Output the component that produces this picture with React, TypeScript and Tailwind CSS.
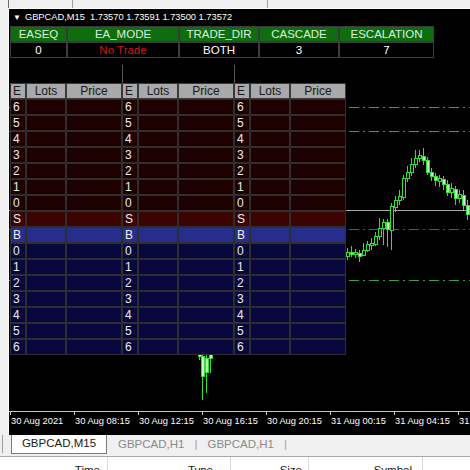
import React from "react";

type Kind = "head" | "sell" | "s" | "b" | "buy";

const ROW_STYLE: Record<Kind, string> = {
  head: "bg-[#a9a9a9] text-[#1a1a1a] border-[#3a3a3a]",
  sell: "bg-[#1e0000] text-[#ececec] border-[#2e2e2e]",
  s: "bg-[#3c0303] text-[#ececec] border-[#2e2e2e]",
  b: "bg-[#272d8b] text-[#ececec] border-[#2e2e2e]",
  buy: "bg-[#08083f] text-[#ececec] border-[#2e2e2e]",
};

// [x, open, close, high, low] in page pixels
const CANDLES: number[][] = [
  [347, 256, 252, 248, 260],
  [351, 252, 254, 246, 257],
  [355, 254, 252, 249, 258],
  [359, 253, 256, 250, 262],
  [363, 255, 250, 243, 256],
  [367, 250, 244, 241, 252],
  [371, 245, 243, 238, 250],
  [375, 244, 236, 232, 246],
  [379, 236, 228, 218, 240],
  [383, 228, 222, 219, 245],
  [387, 222, 229, 219, 247],
  [391, 230, 206, 203, 250],
  [395, 207, 200, 196, 212],
  [399, 200, 196, 190, 205],
  [403, 197, 178, 175, 200],
  [407, 178, 172, 166, 182],
  [411, 172, 164, 158, 176],
  [415, 164, 158, 150, 168],
  [419, 158, 155, 150, 162],
  [423, 156, 160, 148, 165],
  [427, 160, 172, 157, 175],
  [431, 172, 176, 168, 181],
  [435, 176, 180, 173, 186],
  [439, 181, 178, 175, 187],
  [443, 179, 184, 176, 190],
  [447, 184, 192, 180, 196],
  [451, 192, 188, 183, 198],
  [455, 189, 198, 186, 205],
  [459, 198, 194, 190, 203],
  [463, 195, 205, 190, 210],
  [467, 205, 214, 200, 220],
  // under the middle ladder
  [199, 345, 356, 340, 360],
  [202, 356, 376, 350, 400],
  [206, 358, 372, 352, 393],
  [210, 350, 358, 345, 373],
];

const HLINES = [
  { y: 107, color: "#3f9f3f", dash: "10 4 2 4" },
  { y: 131, color: "#3f9f3f", dash: "10 4 2 4" },
  { y: 210, color: "#a8a8a8", dash: undefined },
  { y: 229, color: "#e01c1c", dash: "10 4 2 4" },
  { y: 280, color: "#3f9f3f", dash: "10 4 2 4" },
];

const AXIS = [
  "30 Aug 2021",
  "30 Aug 08:15",
  "30 Aug 12:15",
  "30 Aug 16:15",
  "30 Aug 20:15",
  "31 Aug 00:15",
  "31 Aug 04:15",
  "31 Aug 08:15",
];

function ChartDrawing() {
  return (
    <svg className="absolute inset-0 h-full w-full" shapeRendering="crispEdges">
      <g transform="translate(-9,-9)">
        {HLINES.map((l) => (
          <line
            key={l.y}
            x1={9}
            x2={470}
            y1={l.y + 0.5}
            y2={l.y + 0.5}
            stroke={l.color}
            strokeDasharray={l.dash}
          />
        ))}
        {CANDLES.map(([x, o, c, h, lo]) => {
          const top = Math.min(o, c);
          const bull = c < o;
          return (
            <g key={x}>
              <line x1={x + 0.5} x2={x + 0.5} y1={h} y2={lo} stroke="#34e034" />
              <rect
                x={x - 1}
                y={top + 0.5}
                width={3}
                height={Math.max(1, Math.abs(o - c))}
                fill={bull ? "#000000" : "#bdf5bd"}
                stroke="#34e034"
              />
            </g>
          );
        })}
      </g>
    </svg>
  );
}

function LadderRow({ kind, e, lots = "", price = "" }: { kind: Kind; e: string; lots?: string; price?: string }) {
  const base = `h-[16px] border leading-[14px] ${ROW_STYLE[kind]}`;
  return (
    <div className="flex">
      <div className={`${base} w-[16px] pl-[2px]`}>{e}</div>
      <div className={`${base} w-[40px] text-center`}>{lots}</div>
      <div className={`${base} w-[56px] text-center`}>{price}</div>
    </div>
  );
}

function Ladder() {
  return (
    <div className="flex w-[112px] flex-col text-[12px]">
      <LadderRow kind="head" e="E" lots="Lots" price="Price" />
      {["6", "5", "4", "3", "2", "1", "0"].map((n) => (
        <LadderRow key={"s" + n} kind="sell" e={n} />
      ))}
      <LadderRow kind="s" e="S" />
      <LadderRow kind="b" e="B" />
      {["0", "1", "2", "3", "4", "5", "6"].map((n) => (
        <LadderRow key={"b" + n} kind="buy" e={n} />
      ))}
    </div>
  );
}

const INFO = [
  { head: "EASEQ", value: "0", w: "w-[57px]", red: false },
  { head: "EA_MODE", value: "No Trade", w: "w-[112px]", red: true },
  { head: "TRADE_DIR", value: "BOTH", w: "w-[80px]", red: false },
  { head: "CASCADE", value: "3", w: "w-[80px]", red: false },
  { head: "ESCALATION", value: "7", w: "w-[95px]", red: false },
];

export default function App() {
  return (
    <div className="flex h-[470px] w-[470px] flex-col overflow-hidden bg-[#f0f0f0] font-['Liberation_Sans',Arial,sans-serif]">
      {/* window frames above the chart */}
      <div className="flex h-[8px] shrink-0">
        <div className="w-[9px] border-r border-[#6a6a6a]" />
        <div className="w-[64px] border-r border-[#a0a0a0]" />
        <div className="w-[195px] border-r border-[#a0a0a0]" />
      </div>

      <div className="flex h-[427px] shrink-0">
        <div className="w-[8px] bg-[#f0f0f0]" />
        {/* chart */}
        <div className="relative flex flex-1 flex-col overflow-hidden border-l border-t border-white bg-black">
          <ChartDrawing />
          <div className="relative flex flex-1 flex-col pl-[1px]">
            <div className="flex h-[17px] items-center gap-[4px] pl-[3px] text-[9.3px] leading-[17px] text-white">
              <span className="text-[8px]">▼</span>
              <span>GBPCAD,M15&nbsp; 1.73570 1.73591 1.73500 1.73572</span>
            </div>

            <div className="flex text-[11.5px]">
              {INFO.map((c) => (
                <div key={c.head} className={`flex flex-col ${c.w}`}>
                  <div className="h-[16px] border border-[#3a3a3a] bg-[#0e6d0e] text-center leading-[15px] text-[#dcefdc]">
                    {c.head}
                  </div>
                  <div
                    className={`h-[16px] border border-[#3c3c3c] bg-black text-center leading-[15px] ${
                      c.red ? "text-[#d01818]" : "text-white"
                    }`}
                  >
                    {c.value}
                  </div>
                </div>
              ))}
            </div>

            <div className="flex h-[25px]">
              <div className="w-[112px]" />
              <div className="w-[112px] pt-[7px]">
                <div className="h-[18px] border-l border-[#555555]" />
              </div>
              <div className="w-[112px] pt-[7px]">
                <div className="h-[18px] border-l border-[#555555]" />
              </div>
            </div>

            <div className="flex">
              <Ladder />
              <Ladder />
              <Ladder />
            </div>

            <div className="flex-1" />
          </div>

          {/* time axis */}
          <div className="relative flex h-[24px] shrink-0 border-t border-[#c8c8c8] pl-[1px] text-[9.3px] text-white">
            {AXIS.map((t) => (
              <div key={t} className="flex w-[64px] shrink-0 flex-col">
                <div className="h-[3px] w-px bg-[#c8c8c8]" />
                <div className="whitespace-nowrap pl-px leading-[12px]">{t}</div>
              </div>
            ))}
          </div>
        </div>
      </div>

      {/* chart tabs */}
      <div className="flex h-[21px] shrink-0 items-start text-[11.5px]">
        <div className="h-[18px] w-[3px] border-r border-[#a0a0a0]" />
        <div className="w-[8px]" />
        <div className="flex h-[19px] w-[96px] items-center justify-center border-x border-b border-[#7a7a7a] bg-white text-[#1a1a1a]">
          GBPCAD,M15
        </div>
        <div className="flex h-[19px] items-center pl-[11px] text-[#8a8a8a]">
          <span>GBPCAD,H1</span>
          <span className="px-[10px] text-[#a0a0a0]">|</span>
          <span>GBPCAD,H1</span>
          <span className="px-[10px] text-[#a0a0a0]">|</span>
        </div>
      </div>

      {/* terminal list header */}
      <div className="flex flex-1 border-t border-[#a8a8a8] bg-white text-[11.5px] leading-[14px] text-[#1a1a1a]">
        <div className="w-[108px] border-r border-[#d8d8d8] pr-[7px] pt-[6px] text-right">Time</div>
        <div className="w-[123px] border-r border-[#d8d8d8] pr-[17px] pt-[6px] text-right">Type</div>
        <div className="w-[78px] border-r border-[#d8d8d8] pr-[6px] pt-[6px] text-right">Size</div>
        <div className="w-[114px] border-r border-[#d8d8d8] pr-[10px] pt-[6px] text-right">Symbol</div>
      </div>
    </div>
  );
}
